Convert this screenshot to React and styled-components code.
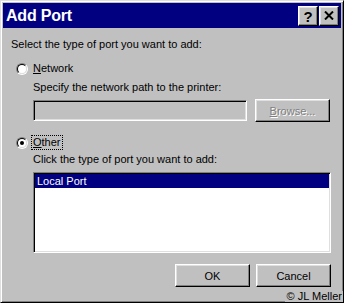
import styled, { createGlobalStyle } from 'styled-components';

const Global = createGlobalStyle`
  html, body {
    margin: 0;
    padding: 0;
    background: #c0c0c0;
  }
  body {
    font-family: "Liberation Sans", Arial, sans-serif;
    font-size: 11px;
    color: #000;
  }
`;

const App = () => (
  <>
    <Global />
    <Window>
      <TitleBar>
        <Title>Add Port</Title>
        <CaptionButtons>
          <CaptionButton>
            <HelpMark>?</HelpMark>
          </CaptionButton>
          <CaptionButton>
            <svg width="10" height="9" viewBox="0 0 10 9">
              <path d="M1 0.5 L9 8.5 M9 0.5 L1 8.5" stroke="#000" strokeWidth="2" />
            </svg>
          </CaptionButton>
        </CaptionButtons>
      </TitleBar>

      <Body>
        <Line>Select the type of port you want to add:</Line>

        <RadioRow $top={11}>
          <Radio />
          <RadioLabel>
            <u>N</u>etwork
          </RadioLabel>
        </RadioRow>
        <Indent>
          <Line $top={6}>Specify the network path to the printer:</Line>
          <PathRow>
            <TextBox />
            <Button $disabled $width={75}>
              <u>B</u>rowse...
            </Button>
          </PathRow>
        </Indent>

        <RadioRow $top={14}>
          <Radio $checked />
          <RadioLabel $focused>
            <u>O</u>ther
          </RadioLabel>
        </RadioRow>
        <Indent>
          <Line $top={4}>Click the type of port you want to add:</Line>
          <ListBox>
            <ListItem $selected>Local Port</ListItem>
          </ListBox>
        </Indent>

        <Footer>
          <Button $width={75}>OK</Button>
          <Button $width={75}>Cancel</Button>
        </Footer>
      </Body>

      <Credit>© JL Meller</Credit>
    </Window>
  </>
);

const Window = styled.div`
  position: relative;
  box-sizing: border-box;
  width: 344px;
  height: 303px;
  padding: 2px;
  background: #c0c0c0;
  border: 1px solid;
  border-color: #dfdfdf #000 #000 #dfdfdf;
  box-shadow: inset 1px 1px #fff, inset -1px -1px #808080;
  overflow: hidden;
`;

const TitleBar = styled.div`
  display: flex;
  align-items: center;
  justify-content: space-between;
  height: 25px;
  padding: 0 2px 0 3px;
  background: #000080;
`;

const Title = styled.span`
  color: #fff;
  font-size: 16px;
  font-weight: bold;
  letter-spacing: -0.2px;
`;

const CaptionButtons = styled.div`
  display: flex;
  gap: 1px;
`;

const CaptionButton = styled.div`
  box-sizing: border-box;
  display: flex;
  align-items: center;
  justify-content: center;
  width: 20px;
  height: 20px;
  background: #c0c0c0;
  border: 1px solid;
  border-color: #fff #000 #000 #fff;
  box-shadow: inset -1px -1px #808080, inset 1px 1px #dfdfdf;
`;

const HelpMark = styled.span`
  font-size: 15px;
  font-weight: bold;
  line-height: 1;
  margin-top: 1px;
`;

const Body = styled.div`
  display: flex;
  flex-direction: column;
  padding: 10px 10px 0 8px;
`;

const Line = styled.div`
  line-height: 13px;
  margin-top: ${(p) => p.$top || 0}px;
  white-space: nowrap;
`;

const Indent = styled.div`
  display: flex;
  flex-direction: column;
  margin-left: 22px;
`;

const RadioRow = styled.div`
  display: flex;
  align-items: center;
  height: 13px;
  margin-top: ${(p) => p.$top}px;
  margin-left: 5px;
  gap: 4px;
`;

const Radio = styled.span`
  position: relative;
  box-sizing: border-box;
  width: 12px;
  height: 12px;
  border-radius: 50%;
  border: 1px solid;
  border-color: #808080 #fff #fff #808080;

  &::before {
    content: '';
    position: absolute;
    inset: 0;
    border-radius: 50%;
    border: 1px solid;
    border-color: #000 #dfdfdf #dfdfdf #000;
    background: #fff;
  }

  &::after {
    content: '';
    display: ${(p) => (p.$checked ? 'block' : 'none')};
    position: absolute;
    left: 3px;
    top: 3px;
    width: 4px;
    height: 4px;
    border-radius: 50%;
    background: #000;
  }
`;

const RadioLabel = styled.span`
  line-height: 13px;
  padding: 0 1px;
  outline: ${(p) => (p.$focused ? '1px dotted #000' : 'none')};
`;

const PathRow = styled.div`
  display: flex;
  align-items: center;
  gap: 8px;
  margin-top: 5px;
`;

const TextBox = styled.div`
  box-sizing: border-box;
  width: 214px;
  height: 21px;
  background: #c0c0c0;
  border: 1px solid;
  border-color: #808080 #fff #fff #808080;
  box-shadow: inset 1px 1px #000, inset -1px -1px #dfdfdf;
`;

const Button = styled.div`
  box-sizing: border-box;
  display: flex;
  align-items: center;
  justify-content: center;
  width: ${(p) => p.$width}px;
  height: 23px;
  background: #c0c0c0;
  border: 1px solid;
  border-color: #fff #000 #000 #fff;
  box-shadow: inset -1px -1px #808080, inset 1px 1px #dfdfdf;
  color: ${(p) => (p.$disabled ? '#808080' : '#000')};
  text-shadow: ${(p) => (p.$disabled ? '1px 1px #fff' : 'none')};
`;

const ListBox = styled.div`
  box-sizing: border-box;
  height: 81px;
  margin-top: 6px;
  padding: 1px 1px 1px 1px;
  background: #fff;
  border: 1px solid;
  border-color: #808080 #fff #fff #808080;
  box-shadow: inset 1px 1px #000, inset -1px -1px #dfdfdf;
`;

const ListItem = styled.div`
  line-height: 14px;
  padding-left: 2px;
  background: ${(p) => (p.$selected ? '#000080' : 'transparent')};
  color: ${(p) => (p.$selected ? '#fff' : '#000')};
`;

const Footer = styled.div`
  display: flex;
  justify-content: flex-end;
  gap: 6px;
  margin-top: 11px;
`;

const Credit = styled.span`
  position: absolute;
  right: 0;
  bottom: 0;
  padding: 0 1px 0 2px;
  line-height: 11px;
  font-size: 11px;
  background: #c0c0c0;
`;

export default App;
